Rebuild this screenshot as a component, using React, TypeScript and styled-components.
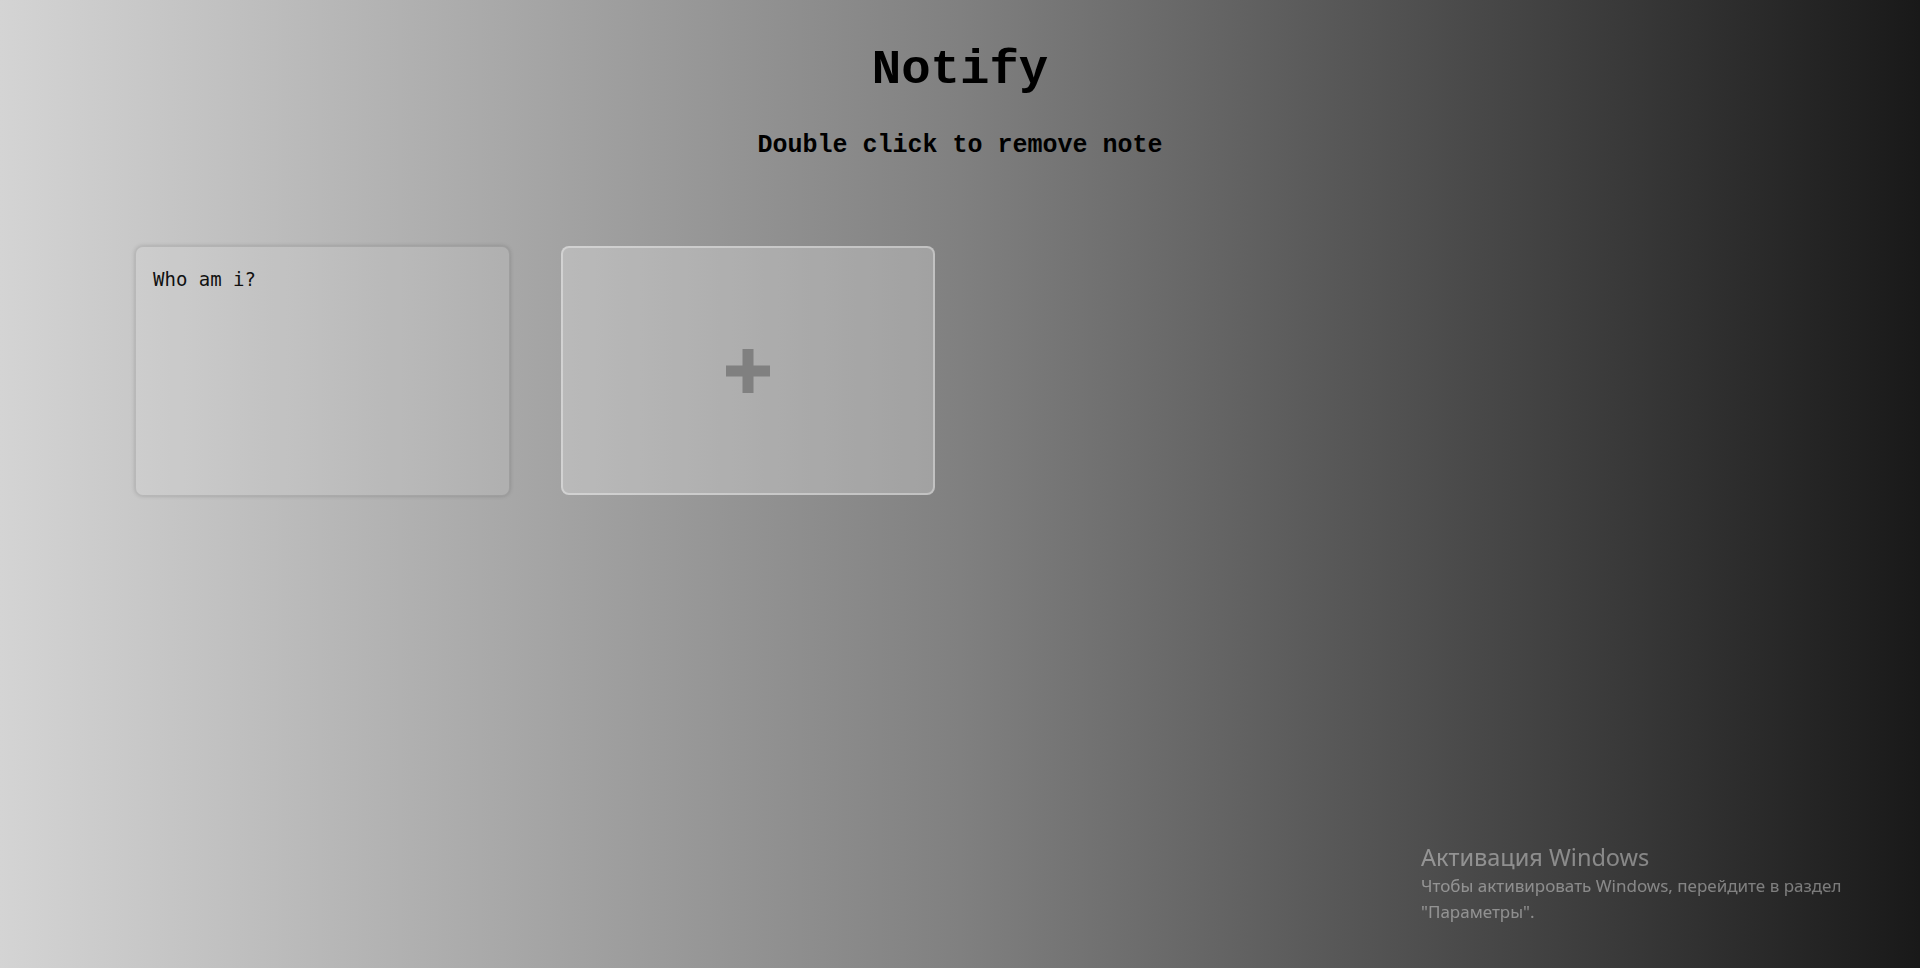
import React from "react";
import styled, { createGlobalStyle } from "styled-components";

const GlobalStyle = createGlobalStyle`
  html, body {
    margin: 0;
    padding: 0;
    height: 100%;
  }
  body {
    font-family: "Courier New", "Liberation Mono", monospace;
    overflow: hidden;
  }
`;

const Page = styled.div`
  min-height: 100vh;
  box-sizing: border-box;
  padding-top: 42px;
  background: linear-gradient(to right, #d4d4d4, #808080, #191919);
  display: flex;
  flex-direction: column;
`;

const Title = styled.h1`
  margin: 0;
  text-align: center;
  font-family: "Courier New", "Nimbus Mono PS", "FreeMono", "Liberation Mono", monospace;
  font-weight: 700;
  font-size: 49px;
  line-height: 56px;
  color: #000;
`;

const Subtitle = styled.p`
  margin: 34px 0 0;
  text-align: center;
  font-family: "Courier New", "Nimbus Mono PS", "FreeMono", "Liberation Mono", monospace;
  font-weight: 700;
  font-size: 25px;
  line-height: 28px;
  color: #000;
`;

const NotesGrid = styled.div`
  margin-top: 86px;
  padding-left: 135px;
  display: flex;
  gap: 51px;
  align-items: flex-start;
`;

const Note = styled.textarea`
  box-sizing: border-box;
  width: 375px;
  height: 250px;
  padding: 21px 17px;
  margin: 0;
  border: 1px solid rgba(0, 0, 0, 0.1);
  border-radius: 8px;
  background: rgba(255, 255, 255, 0.1);
  box-shadow: 0 0 4px rgba(0, 0, 0, 0.18);
  font-family: "DejaVu Sans Mono", Consolas, monospace;
  font-size: 19px;
  line-height: 22px;
  color: #111;
  resize: none;
  outline: none;
`;

const AddButton = styled.button`
  box-sizing: border-box;
  width: 374px;
  height: 249px;
  margin: 0;
  padding: 0;
  border: 2px solid rgba(255, 255, 255, 0.35);
  border-radius: 8px;
  background: rgba(255, 255, 255, 0.25);
  display: flex;
  align-items: center;
  justify-content: center;
  cursor: pointer;
`;

const Watermark = styled.div`
  position: fixed;
  left: 1421px;
  top: 841px;
  font-family: "Noto Sans", "Open Sans", sans-serif;
  color: rgba(255, 255, 255, 0.4);
  pointer-events: none;
`;

const WatermarkTitle = styled.div`
  font-size: 23.5px;
  line-height: 32px;
  white-space: nowrap;
`;

const WatermarkText = styled.div`
  font-size: 17px;
  line-height: 25.5px;
  white-space: nowrap;
`;

const PlusIcon = () => (
  <svg width="44" height="44" viewBox="0 0 44 44" aria-hidden="true">
    <rect x="0" y="16.5" width="44" height="11" fill="#808080" />
    <rect x="16.5" y="0" width="11" height="44" fill="#808080" />
  </svg>
);

export default function App() {
  return (
    <>
      <GlobalStyle />
      <Page>
        <Title>Notify</Title>
        <Subtitle>Double click to remove note</Subtitle>
        <NotesGrid>
          <Note defaultValue="Who am i?" spellCheck={false} />
          <AddButton aria-label="Add note">
            <PlusIcon />
          </AddButton>
        </NotesGrid>
        <Watermark>
          <WatermarkTitle>Активация Windows</WatermarkTitle>
          <WatermarkText>
            Чтобы активировать Windows, перейдите в раздел
            <br />
            "Параметры".
          </WatermarkText>
        </Watermark>
      </Page>
    </>
  );
}
